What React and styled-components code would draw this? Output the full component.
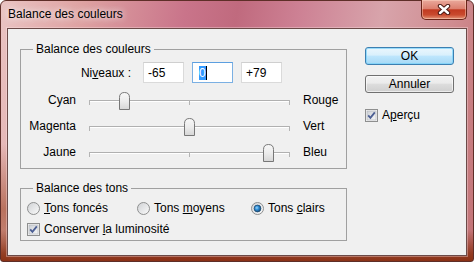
import React from 'react';
import styled, { createGlobalStyle } from 'styled-components';

const Global = createGlobalStyle`
  html, body { margin: 0; padding: 0; background: #fff; }
  body { font-family: "Liberation Sans", Arial, sans-serif; font-size: 12px; color: #000; }
`;

var Window = styled.div`
    box-sizing: border-box;
    width: 474px;
    height: 262px;
    border: 1px solid #5e2e28;
    border-radius: 6px 6px 3px 3px;
    padding: 0 6px 5px 6px;
    display: flex;
    flex-direction: column;
    background:
        linear-gradient(to bottom, rgba(120, 35, 10, 0) 88%, rgba(135, 45, 15, 0.8) 97%, rgba(135, 45, 15, 0.95) 100%),
        linear-gradient(to bottom, rgba(150, 55, 25, 0) 55%, rgba(150, 60, 25, 0.55) 80%, rgba(150, 60, 25, 0.3) 100%) 0 0 / 7px 100% no-repeat,
        linear-gradient(100deg, #eac4c3 0%, #dea2a2 16%, #c9748a 36%, #c06a7e 46%, #cd8194 58%, #d8a4ab 74%, #cf8c90 88%, #c27276 100%);
`

var TitleBar = styled.div`
    height: 27px;
    display: flex;
    justify-content: space-between;
    align-items: flex-start;
    flex-shrink: 0;
`

var Title = styled.div`
    padding: 6px 0 0 1px;
    font-size: 12px;
    line-height: 15px;
    color: #000;
    text-shadow: 0 0 6px rgba(255, 255, 255, 0.9), 0 0 10px rgba(255, 255, 255, 0.6);
`

var CloseButton = styled.div`
    box-sizing: border-box;
    width: 46px;
    height: 20px;
    margin-top: -1px;
    border: 1px solid #6a2418;
    border-top: none;
    border-radius: 0 0 5px 5px;
    display: flex;
    align-items: center;
    justify-content: center;
    background: linear-gradient(to bottom, #eaa99c 0%, #dc806f 45%, #c13a21 52%, #c94a2e 78%, #e49478 100%);
    box-shadow: inset 0 0 0 1px rgba(255, 220, 200, 0.45);
`

var Client = styled.div`
    flex: 1;
    border: 1px solid #6b4a48;
    background: #f0f0f0;
    display: flex;
    padding-left: 12px;
    box-shadow: 0 0 0 1px rgba(255, 235, 235, 0.35);
`

var LeftColumn = styled.div`
    width: 327px;
    display: flex;
    flex-direction: column;
`

var RightColumn = styled.div`
    width: 89px;
    margin-left: 18px;
    padding-top: 18px;
    display: flex;
    flex-direction: column;
`

var Group = styled.fieldset`
    margin: ${props => props.top}px 0 0 0;
    padding: ${props => props.pad};
    border: 1px solid #a0a0a0;
    min-width: 0;
`

var Legend = styled.legend`
    margin-left: 12px;
    padding: 0 3px;
    font-size: 12px;
    line-height: 14px;
`

var LevelsRow = styled.div`
    display: flex;
    align-items: center;
    height: 21px;
`

var LevelsLabel = styled.div`
    width: 110px;
    margin-right: 12px;
    text-align: right;
`

var LevelInput = styled.div`
    box-sizing: border-box;
    width: 41px;
    height: 21px;
    margin-right: 8px;
    padding-left: ${props => props.focused ? 6 : 4}px;
    display: flex;
    align-items: center;
    background: #fff;
    border: 1px solid ${props => props.focused ? '#7bb0e3' : '#dadada'};
    border-top-color: ${props => props.focused ? '#5c9fe0' : '#cfcfcf'};
`

var Selected = styled.span`
    background: #3399ff;
    color: #fff;
    line-height: 14px;
    border-right: 1px solid #000;
`

var Sliders = styled.div`
    margin-top: 4px;
    display: flex;
    flex-direction: column;
`

var SliderRow = styled.div`
    height: 26px;
    display: flex;
    align-items: center;
`

var SideLabel = styled.div`
    width: ${props => props.w}px;
    text-align: ${props => props.align};
    margin-right: ${props => props.mr || 0}px;
`

var Track = styled.div`
    position: relative;
    width: 201px;
    height: 26px;
    margin-right: 13px;
    background:
        linear-gradient(#b4b4b4, #b4b4b4) 0 13px / 1px 5px no-repeat,
        linear-gradient(#b4b4b4, #b4b4b4) 100px 13px / 1px 5px no-repeat,
        linear-gradient(#b4b4b4, #b4b4b4) 200px 13px / 1px 5px no-repeat,
        linear-gradient(#b0b0b0, #b0b0b0) 0 13px / 201px 1px no-repeat,
        linear-gradient(#ffffff, #ffffff) 0 14px / 201px 1px no-repeat;
`

var Thumb = styled.svg`
    position: absolute;
    top: 5px;
    width: 11px;
    height: 18px;
`

var Button = styled.div`
    box-sizing: border-box;
    height: 18px;
    margin-bottom: ${props => props.mb}px;
    border: 1px solid ${props => props.primary ? '#3c7fb1' : '#707070'};
    border-radius: 3px;
    display: flex;
    align-items: center;
    justify-content: center;
    font-size: 12px;
    background: ${props => props.primary
        ? 'linear-gradient(to bottom, #eaf6fd 0%, #d9f0fc 45%, #bee6fd 50%, #a7d9f5 100%)'
        : 'linear-gradient(to bottom, #f2f2f2 0%, #ebebeb 45%, #dddddd 50%, #cfcfcf 100%)'};
    box-shadow: inset 0 0 0 1px ${props => props.primary ? 'rgba(120, 210, 250, 0.7)' : 'rgba(255, 255, 255, 0.6)'};
`

var CheckRow = styled.div`
    height: 16px;
    display: flex;
    align-items: center;
    margin-top: ${props => props.mt || 0}px;
`

var Option = styled.div`
    width: ${props => props.w ? props.w + 'px' : 'auto'};
    display: flex;
    align-items: center;
`

var Box = styled.svg`
    width: 13px;
    height: 13px;
    margin-right: 4px;
    flex-shrink: 0;
`

var ToneGroupBody = styled.div`
    display: flex;
    flex-direction: column;
    padding-left: 6px;
    gap: 5px;
`

var Key = styled.span`
    text-decoration: underline;
`

var CloseX = () => (
    <svg width="14" height="11" viewBox="0 0 14 11">
        <path d="M3 2 L11 9 M11 2 L3 9" stroke="#4a1a14" strokeWidth="4.4" strokeLinecap="round" />
        <path d="M3 2 L11 9 M11 2 L3 9" stroke="#ffffff" strokeWidth="2.4" strokeLinecap="round" />
    </svg>
)

var CheckBox = () => (
    <Box viewBox="0 0 13 13">
        <defs>
            <linearGradient id="cbfill" x1="0" y1="0" x2="1" y2="1">
                <stop offset="0" stopColor="#cbcfd5" />
                <stop offset="1" stopColor="#f7f7f7" />
            </linearGradient>
        </defs>
        <rect x="0.5" y="0.5" width="12" height="12" fill="#f4f4f4" stroke="#8e8f8f" />
        <rect x="2" y="2" width="9" height="9" fill="url(#cbfill)" stroke="#aeb3b9" strokeWidth="0.6" />
        <path d="M3.2 6.4 L5.4 8.8 L9.8 3.4" fill="none" stroke="#4b5e93" strokeWidth="1.8" />
    </Box>
)

var Radio = ({ checked }) => (
    <Box viewBox="0 0 13 13">
        <defs>
            <linearGradient id="rdfill" x1="0" y1="0" x2="1" y2="1">
                <stop offset="0" stopColor="#cfd1d4" />
                <stop offset="1" stopColor="#fbfbfb" />
            </linearGradient>
            <radialGradient id="rddot" cx="0.4" cy="0.4" r="0.6">
                <stop offset="0" stopColor="#9ad6fb" />
                <stop offset="0.5" stopColor="#2a8ad4" />
                <stop offset="1" stopColor="#1b4d79" />
            </radialGradient>
        </defs>
        <circle cx="6.5" cy="6.5" r="6" fill="url(#rdfill)" stroke="#8e8f8f" />
        {checked && <circle cx="6.5" cy="6.5" r="3.4" fill="url(#rddot)" stroke="#1f4c73" strokeWidth="0.8" />}
    </Box>
)

var SliderThumb = ({ value }) => (
    <Thumb viewBox="0 0 11 18" style={{ left: (value + 100) - 5 + 'px' }}>
        <defs>
            <linearGradient id="thfill" x1="0" y1="0" x2="0" y2="1">
                <stop offset="0" stopColor="#f8f8f8" />
                <stop offset="0.5" stopColor="#ececec" />
                <stop offset="1" stopColor="#d6d6d6" />
            </linearGradient>
        </defs>
        <path d="M0.5 17.5 V5.5 Q0.5 0.5 5.5 0.5 Q10.5 0.5 10.5 5.5 V17.5 Z" fill="url(#thfill)" stroke="#777777" />
    </Thumb>
)

var sliders = [
    { left: 'Cyan', right: 'Rouge', value: -65 },
    { left: 'Magenta', right: 'Vert', value: 0 },
    { left: 'Jaune', right: 'Bleu', value: 79 },
]

var App = () => {
    return (
        <>
            <Global />
            <Window>
                <TitleBar>
                    <Title>Balance des couleurs</Title>
                    <CloseButton><CloseX /></CloseButton>
                </TitleBar>
                <Client>
                    <LeftColumn>
                        <Group top={13} pad="6px 0 3px 0">
                            <Legend>Balance des couleurs</Legend>
                            <LevelsRow>
                                <LevelsLabel>Ni<Key>v</Key>eaux :</LevelsLabel>
                                <LevelInput>-65</LevelInput>
                                <LevelInput focused><Selected>0</Selected></LevelInput>
                                <LevelInput>+79</LevelInput>
                            </LevelsRow>
                            <Sliders>
                                {sliders.map(s => (
                                    <SliderRow key={s.left}>
                                        <SideLabel w={55} align="right" mr={13}>{s.left}</SideLabel>
                                        <Track><SliderThumb value={s.value} /></Track>
                                        <SideLabel w={40} align="left">{s.right}</SideLabel>
                                    </SliderRow>
                                ))}
                            </Sliders>
                        </Group>
                        <Group top={12} pad="5px 0 3px 0">
                            <Legend>Balance des tons</Legend>
                            <ToneGroupBody>
                                <CheckRow>
                                    <Option w={110}><Radio /><span><Key>T</Key>ons foncés</span></Option>
                                    <Option w={114}><Radio /><span>Tons <Key>m</Key>oyens</span></Option>
                                    <Option><Radio checked /><span>Tons <Key>c</Key>lairs</span></Option>
                                </CheckRow>
                                <CheckRow>
                                    <Option><CheckBox /><span>Conserver <Key>l</Key>a luminosité</span></Option>
                                </CheckRow>
                            </ToneGroupBody>
                        </Group>
                    </LeftColumn>
                    <RightColumn>
                        <Button primary mb={10}>OK</Button>
                        <Button mb={0}>Annuler</Button>
                        <CheckRow mt={14}>
                            <Option><CheckBox /><span>A<Key>p</Key>erçu</span></Option>
                        </CheckRow>
                    </RightColumn>
                </Client>
            </Window>
        </>
    )
}

export default App;
